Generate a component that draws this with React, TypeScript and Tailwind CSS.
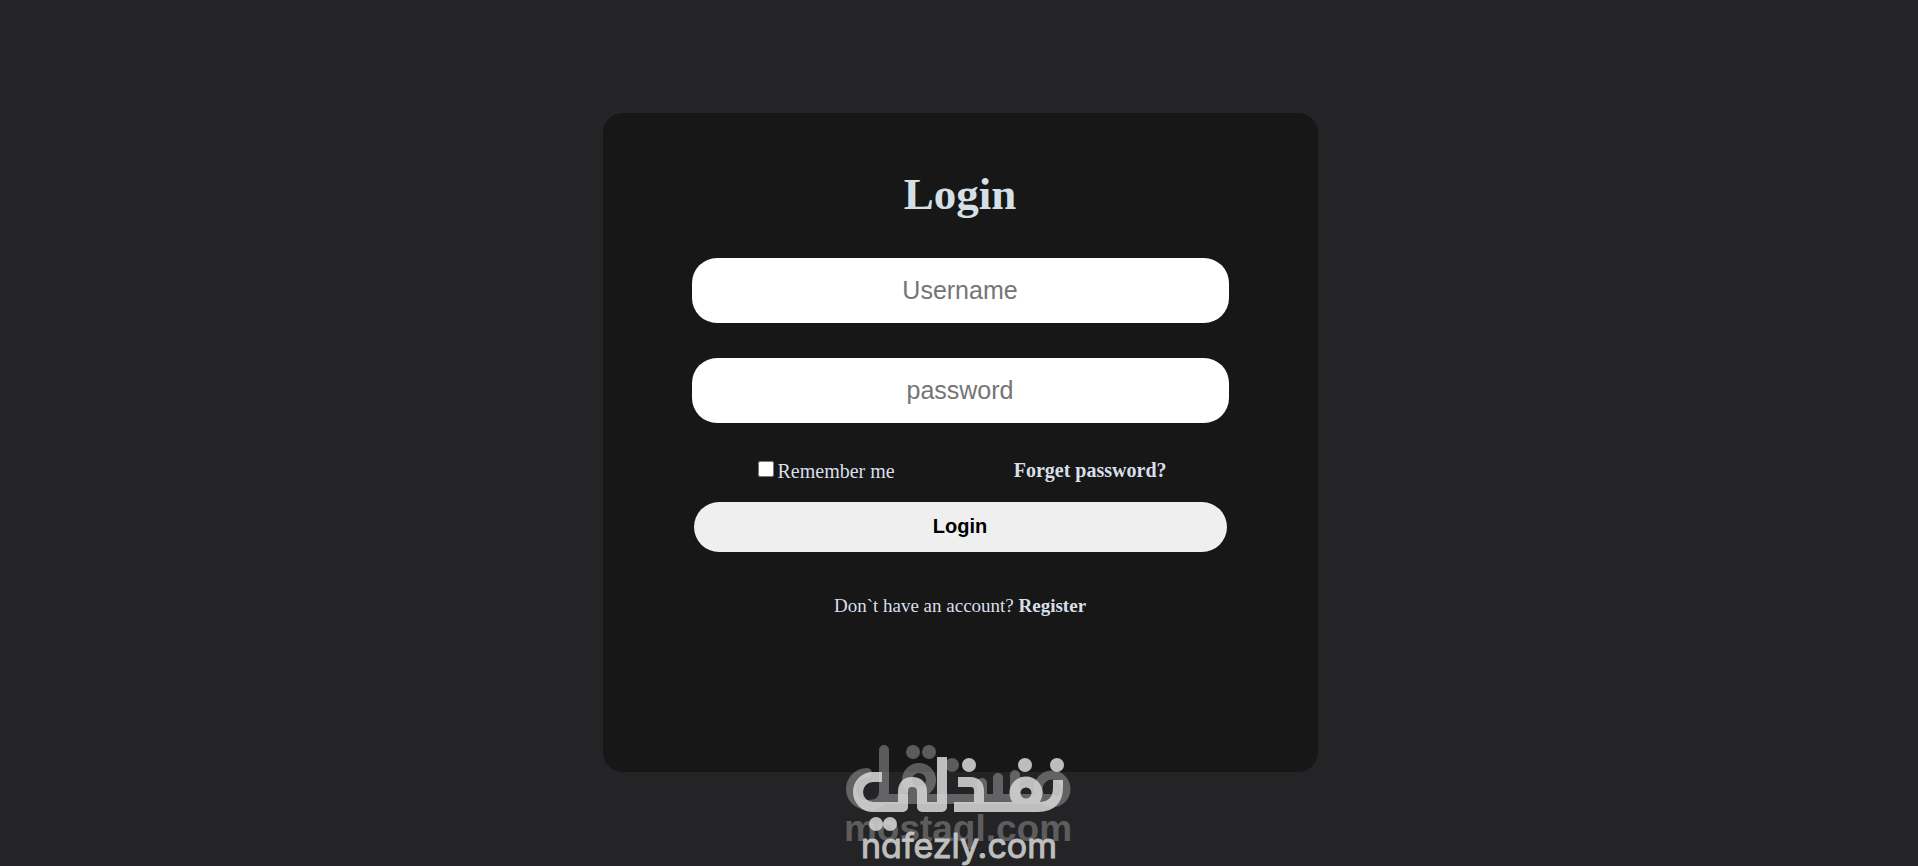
import { useState } from "react";

const linkClassName = "font-bold text-[#d9dfea] hover:underline";
const inputClassName =
  "h-[65px] w-full rounded-[25px] bg-white text-center font-['Liberation_Sans',sans-serif] text-[25px] text-black outline-none placeholder:text-[#757575]";

const MostaqlMark = () => (
  <svg viewBox="0 0 260 136" className="h-[136px] w-[260px]" aria-hidden="true">
    <g opacity="0.36">
      <g fill="none" stroke="#d4d4d4" strokeWidth="10" strokeLinecap="round" strokeLinejoin="round">
        <path d="M37 43 A16 16 0 0 0 37 75 Q54 75 54 62 V20 M54 69 H222" />
        <path d="M168 69 V48 M185 69 V45 M152 69 V53" />
        <circle cx="89" cy="50" r="12" />
        <circle cx="222" cy="59" r="14" strokeWidth="9" />
      </g>
      <g fill="#d4d4d4">
        <circle cx="83" cy="22" r="7" />
        <circle cx="99" cy="22" r="7" />
        <circle cx="122" cy="35" r="7" />
      </g>
    </g>
    <text
      x="128"
      y="111"
      textAnchor="middle"
      fill="#d4d4d4"
      opacity="0.32"
      className="font-['Liberation_Sans',sans-serif] text-[37px] font-bold"
    >
      mostaql.com
    </text>
  </svg>
);

const NafezlyMark = () => (
  <svg viewBox="0 0 260 136" className="absolute inset-0 h-[136px] w-[260px]" aria-hidden="true">
    <g opacity="0.88" fill="#d4d4d4">
      <g fill="none" stroke="#d4d4d4" strokeWidth="10" strokeLinejoin="round">
        <path d="M52 47 H43 A15 15 0 0 0 43 77 H73 V62 Q73 52 82 52 Q92 52 92 62 V77 H112 V27" />
        <path d="M128 52 H140 Q149 52 149 61 V77 M124 77 H208 Q228 77 228 57 V50" />
        <circle cx="196" cy="63" r="11" strokeWidth="11" />
      </g>
      <circle cx="139" cy="35" r="7" />
      <circle cx="195" cy="35" r="7" />
      <circle cx="227" cy="35" r="7" />
      <circle cx="46" cy="94" r="7" />
      <circle cx="60" cy="94" r="7" />
      <text
        x="129"
        y="128"
        textAnchor="middle"
        stroke="#d4d4d4"
        strokeWidth="1"
        strokeLinejoin="round"
        className="font-['Inter',sans-serif] text-[34px] font-normal [font-feature-settings:'cv11']"
      >
        nafezly.com
      </text>
    </g>
  </svg>
);

const App = () => {
  const [username, setUsername] = useState("");
  const [password, setPassword] = useState("");
  const [remember, setRemember] = useState(false);

  return (
    <div className="relative flex min-h-screen justify-center bg-[#242426] pt-[113px] pl-0.5 font-['Liberation_Serif',serif] text-[#d9dfea]">
      <main className="mb-[94px] w-full max-w-[715px] rounded-[20px] bg-[#171717] px-[89px] pt-[52px] pb-[152px]">
        <form onSubmit={(e) => e.preventDefault()}>
          <h1 className="text-center text-[45px] leading-[58px] font-bold text-[#d4e0e6]">Login</h1>
          <div className="mt-[35px] flex flex-col gap-[35px]">
            <input
              className={inputClassName}
              type="text"
              aria-label="Username"
              placeholder="Username"
              value={username}
              onChange={(e) => setUsername(e.target.value)}
            />
            <input
              className={inputClassName}
              type="password"
              aria-label="password"
              placeholder="password"
              value={password}
              onChange={(e) => setPassword(e.target.value)}
            />
          </div>
          <div className="mt-[35px] flex justify-between px-[62px] text-[20px] leading-6">
            <label className="flex items-center gap-1 pt-px pl-1">
              <input
                className="mb-1 size-4"
                type="checkbox"
                checked={remember}
                onChange={(e) => setRemember(e.target.checked)}
              />
              Remember me
            </label>
            <a href="#forget" className={linkClassName}>
              Forget password?
            </a>
          </div>
          <div className="mt-[19px] px-0.5">
            <button
              type="submit"
              className="h-[50px] w-full cursor-pointer rounded-[25px] bg-[#efefef] pb-0.5 font-['Liberation_Sans',sans-serif] text-[20px] font-bold text-black"
            >
              Login
            </button>
          </div>
          <p className="mt-[42px] text-center text-[19px] leading-6">
            Don`t have an account?{" "}
            <a href="#register" className={linkClassName}>
              Register
            </a>
          </p>
        </form>
      </main>
      <div className="pointer-events-none absolute inset-x-0 bottom-0 flex justify-center pl-0.5">
        <div className="relative">
          <MostaqlMark />
          <NafezlyMark />
        </div>
      </div>
    </div>
  );
};

export default App;
